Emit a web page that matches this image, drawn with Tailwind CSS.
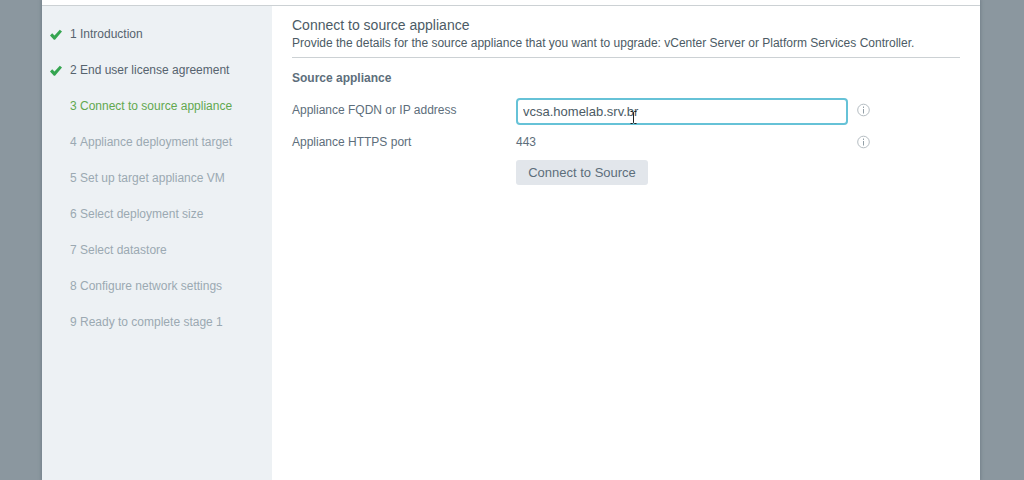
<!DOCTYPE html>
<html lang="en">
<head>
<meta charset="utf-8">
<title>Connect to source appliance</title>
<script src="https://cdn.jsdelivr.net/npm/@tailwindcss/browser@4"></script>
</head>
<body class="flex min-h-screen bg-[#8b979f] pr-11 pl-[42px] font-['Liberation_Sans',Arial,sans-serif] text-xs text-[#5d6e7b]">
<div class="flex min-w-0 flex-1 flex-col bg-white shadow-[0_0_3px_1px_#74808a]">
  <div class="h-1.5 border-b border-[#ccd1d4]"></div>
  <div class="flex flex-1">
    <nav class="w-[230px] shrink-0 bg-[#edf1f4] pt-2.5" aria-label="Upgrade steps">
      <ol class="text-[#9ba9b2]">
        <li class="flex h-9 items-center pl-2 text-[#56636e]">
          <svg class="mt-0.5 mr-2 size-3" viewBox="0 0 12 12" aria-hidden="true"><path d="M0 6.4 2.2 4.3 4.5 6.4 9.8.8 12 2.6 5 10.8H3.9Z" fill="#35a550"/></svg>
          <a href="#1" class="flex"><span class="w-2.5">1</span>Introduction</a>
        </li>
        <li class="flex h-9 items-center pl-2 text-[#56636e]">
          <svg class="mt-0.5 mr-2 size-3" viewBox="0 0 12 12" aria-hidden="true"><path d="M0 6.4 2.2 4.3 4.5 6.4 9.8.8 12 2.6 5 10.8H3.9Z" fill="#35a550"/></svg>
          <a href="#2" class="flex"><span class="w-2.5">2</span>End user license agreement</a>
        </li>
        <li class="flex h-9 items-center pl-7 text-[#62a84f]" aria-current="step"><span class="w-2.5">3</span>Connect to source appliance</li>
        <li class="flex h-9 items-center pl-7"><span class="w-2.5">4</span>Appliance deployment target</li>
        <li class="flex h-9 items-center pl-7"><span class="w-2.5">5</span>Set up target appliance VM</li>
        <li class="flex h-9 items-center pl-7"><span class="w-2.5">6</span>Select deployment size</li>
        <li class="flex h-9 items-center pl-7"><span class="w-2.5">7</span>Select datastore</li>
        <li class="flex h-9 items-center pl-7"><span class="w-2.5">8</span>Configure network settings</li>
        <li class="flex h-9 items-center pl-7"><span class="w-2.5">9</span>Ready to complete stage 1</li>
      </ol>
    </nav>
    <main class="min-w-0 flex-1 px-5 pt-[9px]">
      <header class="border-b border-[#ccd1d4] pb-1.5 text-[#4c5b65]">
        <h1 class="text-sm leading-5">Connect to source appliance</h1>
        <p class="leading-4">Provide the details for the source appliance that you want to upgrade: vCenter Server or Platform Services Controller.</p>
      </header>
      <form>
        <h2 class="pt-3 leading-4 font-bold">Source appliance</h2>
        <div class="mt-2 flex h-8 items-center">
          <label for="host" class="w-56 shrink-0">Appliance FQDN or IP address</label>
          <div class="relative mt-[3px] w-[332px]">
            <input id="host" type="text" value="vcsa.homelab.srv.br" class="block h-[27px] w-full rounded-[4px] border-2 border-[#66c2d7] bg-white px-[5px] text-[13px] text-[#4c5b65] outline-none">
            <svg class="absolute top-3 left-[113px] h-[15px] w-[9px]" viewBox="0 0 9 15" fill="none" stroke="#222" aria-hidden="true"><path d="M1.5 1.5H3.5L4.5 2.5L5.5 1.5H7.5M4.5 2.5V12.5M1.5 13.5H3.5L4.5 12.5L5.5 13.5H7.5"/></svg>
          </div>
          <button type="button" class="ml-2" aria-label="About the appliance address">
            <svg class="size-3.5" viewBox="0 0 14 14" fill="none" aria-hidden="true"><circle cx="7.5" cy="7" r="5.8" stroke="#b5bdc2"/><path d="M7.5 3.5V5M7.5 6V10.5" stroke="#93a0a8"/></svg>
          </button>
        </div>
        <div class="flex h-8 items-center">
          <span class="w-56 shrink-0">Appliance HTTPS port</span>
          <span class="w-[332px]">443</span>
          <button type="button" class="ml-2" aria-label="About the HTTPS port">
            <svg class="size-3.5" viewBox="0 0 14 14" fill="none" aria-hidden="true"><circle cx="7.5" cy="7" r="5.8" stroke="#b5bdc2"/><path d="M7.5 3.5V5M7.5 6V10.5" stroke="#93a0a8"/></svg>
          </button>
        </div>
        <button type="button" class="mt-0.5 ml-56 h-[25px] w-[132px] rounded-[3px] bg-[#e2e6eb] text-[13px]">Connect to Source</button>
      </form>
    </main>
  </div>
</div>
</body>
</html>
